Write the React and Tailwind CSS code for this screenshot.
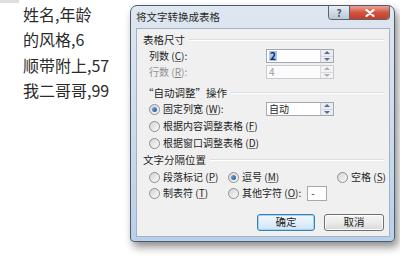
import React from 'react';

const cjk = { fontFamily: '"Noto Sans CJK SC", "Noto Sans", sans-serif' };

function Radio({ checked }) {
  return (
    <span className="w-[11px] h-[11px] rounded-full border border-[#8e8f8f] bg-gradient-to-br from-[#d4d4d4] to-[#fbfbfb] flex items-center justify-center shrink-0">
      {checked && <span className="w-[5px] h-[5px] rounded-full bg-gradient-to-br from-[#7fb2e8] to-[#144d96]" />}
    </span>
  );
}

function Spin({ value, disabled, selected }) {
  return (
    <div className={`flex h-[14px] w-[68px] border ${disabled ? 'border-[#c9cbd0] bg-[#fbfbfb]' : 'border-[#a4a8b0] bg-white'}`}>
      <div className="flex-1 flex items-center pl-[2px] text-[10px] leading-none">
        <span className={selected ? 'bg-[#a9c9ee] text-[#0d2a5e] font-bold px-[1px]' : disabled ? 'text-[#9a9a9a]' : 'text-[#1e1e1e]'}>
          {value}
        </span>
      </div>
      <div className={`w-[13px] flex flex-col border-l ${disabled ? 'border-[#d8dade] bg-[#f3f3f3]' : 'border-[#c4cbd5] bg-[#e9edf2]'}`}>
        <div className="flex-1 flex items-center justify-center border-b border-[#d5dae0]">
          <span className={`w-0 h-0 border-l-[3px] border-r-[3px] border-b-[3px] border-l-transparent border-r-transparent ${disabled ? 'border-b-[#b0b0b0]' : 'border-b-[#5a6f8c]'}`} />
        </div>
        <div className="flex-1 flex items-center justify-center">
          <span className={`w-0 h-0 border-l-[3px] border-r-[3px] border-t-[3px] border-l-transparent border-r-transparent ${disabled ? 'border-t-[#b0b0b0]' : 'border-t-[#5a6f8c]'}`} />
        </div>
      </div>
    </div>
  );
}

function GroupHead({ children }) {
  return (
    <div className="h-[16px] flex items-center pl-[6px] pr-[5px]">
      <span className="text-[10.5px] text-[#1e1e1e] whitespace-nowrap">{children}</span>
      <div className="flex-1 ml-[4px] h-[2px] border-t border-[#d5dfe5] border-b border-b-white" />
    </div>
  );
}

function Key({ k }) {
  return (
    <span> (<span className="underline decoration-[#777]">{k}</span>)</span>
  );
}

export default function App() {
  return (
    <div className="w-[400px] h-[266px] bg-white flex overflow-hidden" style={cjk}>
      <div className="w-[130px] shrink-0 flex flex-col">
        <div className="h-[3px] w-[19px] bg-[#dedede]" />
        <div className="pl-[23px] -mt-[1px] text-[16px] leading-[25.3px] text-[#2a2a2a]">
          <div>姓名,年龄</div>
          <div>的风格,6</div>
          <div>顺带附上,57</div>
          <div>我二哥哥,99</div>
        </div>
      </div>

      <div className="mt-[5px] w-[265px] h-[237px] shrink-0 rounded-t-[7px] rounded-b-[4px] border border-[#4f5b68] bg-gradient-to-b from-[#dfe7f0] via-[#cddcec] to-[#b9d0ea] flex flex-col pl-[5px] pr-[4px] pb-[4px] shadow-[3px_5px_9px_rgba(0,0,0,0.45)]">
        <div className="h-[22px] flex items-start">
          <span className="mt-[3px] text-[10.5px] text-[#2a2a2a]">将文字转换成表格</span>
          <div className="ml-auto flex border border-t-0 border-[#5b6570] rounded-b-[4px] overflow-hidden h-[14px]">
            <div className="w-[21px] bg-gradient-to-b from-[#e8eef5] to-[#b9c7d6] flex items-center justify-center border-r border-[#5b6570] text-[10px] font-bold text-[#48566a] leading-none">?</div>
            <div className="w-[39px] bg-gradient-to-b from-[#e8a393] via-[#d2543f] to-[#c23d27] flex items-center justify-center">
              <svg width="10" height="8" viewBox="0 0 10 8">
                <path d="M1.5 1 L8.5 7 M8.5 1 L1.5 7" stroke="#ffffff" strokeWidth="2.2" strokeLinecap="round" />
              </svg>
            </div>
          </div>
        </div>

        <div className="flex-1 bg-[#f0f0f0] border border-[#9fb2c8] flex flex-col pt-[3px] text-[10px] text-[#1e1e1e] leading-none">
          <GroupHead>表格尺寸</GroupHead>
          <div className="h-[16px] flex items-center pl-[12px]">
            <span className="w-[117px]">列数<Key k="C" />:</span>
            <Spin value="2" selected />
          </div>
          <div className="h-[16px] flex items-center pl-[12px]">
            <span className="w-[117px] text-[#8f8f8f]">行数<Key k="R" />:</span>
            <Spin value="4" disabled />
          </div>

          <div className="mt-[5px]">
            <GroupHead>“自动调整”操作</GroupHead>
          </div>
          <div className="h-[16px] flex items-center pl-[12px]">
            <div className="w-[117px] flex items-center gap-[3px]">
              <Radio checked />
              <span>固定列宽<Key k="W" />:</span>
            </div>
            <Spin value="自动" />
          </div>
          <div className="mt-[1px] h-[16px] flex items-center pl-[12px] gap-[3px]">
            <Radio />
            <span>根据内容调整表格<Key k="F" /></span>
          </div>
          <div className="mt-[1px] h-[16px] flex items-center pl-[12px] gap-[3px]">
            <Radio />
            <span>根据窗口调整表格<Key k="D" /></span>
          </div>

          <div className="mt-[1px]">
            <GroupHead>文字分隔位置</GroupHead>
          </div>
          <div className="mt-[1px] h-[16px] flex items-center pl-[12px]">
            <div className="w-[79px] flex items-center gap-[3px]">
              <Radio />
              <span>段落标记<Key k="P" /></span>
            </div>
            <div className="w-[109px] flex items-center gap-[3px]">
              <Radio checked />
              <span>逗号<Key k="M" /></span>
            </div>
            <div className="flex items-center gap-[3px]">
              <Radio />
              <span>空格<Key k="S" /></span>
            </div>
          </div>
          <div className="h-[16px] flex items-center pl-[12px]">
            <div className="w-[79px] flex items-center gap-[3px]">
              <Radio />
              <span>制表符<Key k="T" /></span>
            </div>
            <div className="flex items-center gap-[3px]">
              <Radio />
              <span>其他字符<Key k="O" />:</span>
            </div>
            <div className="ml-[6px] w-[20px] h-[15px] border border-[#a4a8b0] bg-white flex items-center pl-[3px]">-</div>
          </div>

          <div className="mt-[13px] flex justify-end gap-[9px] pr-[5px]">
            <button className="w-[58px] h-[17px] rounded-[3px] border border-[#3c7fb1] bg-gradient-to-b from-[#f2f8fc] via-[#e2eff9] to-[#cfe4f4] shadow-[inset_0_0_0_1px_#9ed6f5] text-[10.5px] text-[#1e1e1e] leading-none">确定</button>
            <button className="w-[60px] h-[17px] rounded-[3px] border border-[#707070] bg-gradient-to-b from-[#f4f4f4] via-[#ebebeb] to-[#d8d8d8] shadow-[inset_0_0_0_1px_#fcfcfc] text-[10.5px] text-[#1e1e1e] leading-none">取消</button>
          </div>
        </div>
      </div>
    </div>
  );
}
